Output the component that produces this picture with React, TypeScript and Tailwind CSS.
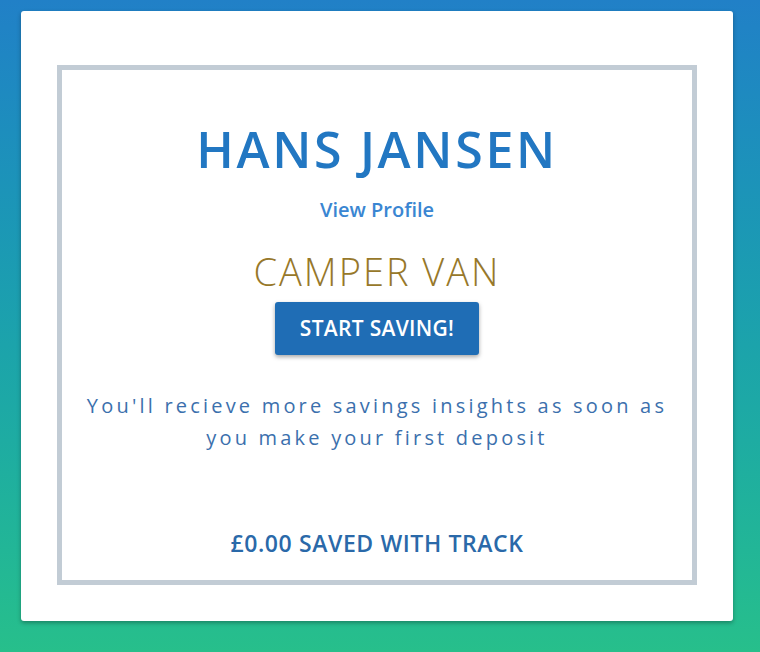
export default function App() {
    return (
        <div className="min-h-[652px] bg-gradient-to-b from-[#2180c7] to-[#27bf8b] pt-[11px] font-['Open_Sans',sans-serif]">
            <div className="ml-[21px] h-[610px] w-[712px] rounded-[3px] bg-white px-[36px] pt-[54px] shadow-[0_2px_4px_rgba(0,0,0,0.3)]">
                <div className="flex h-[520px] flex-col items-center border-[5px] border-[#c2ccd5] text-center">
                    <h1 className="mt-[49px] text-[50px] leading-[60px] font-semibold tracking-[2.7px] text-[#2277c2]">
                        HANS JANSEN
                    </h1>
                    <a className="mt-[17px] text-[20px] leading-[28px] font-semibold text-[#3a86d2]">
                        View Profile
                    </a>
                    <h2 className="mt-[23px] text-[38px] leading-[48px] font-light tracking-[2px] text-[#97782a]">
                        CAMPER VAN
                    </h2>
                    <button className="mt-[7px] h-[53px] w-[204px] rounded-[3px] bg-[#1f6db5] text-[21px] font-semibold tracking-[0.3px] text-white shadow-[0_2px_4px_rgba(0,0,0,0.35)]">
                        START SAVING!
                    </button>
                    <p className="mt-[35px] px-[20px] text-[20px] leading-[32px] tracking-[3.2px] text-[#3b70ad]">
                        You'll recieve more savings insights as soon as you
                        make your first deposit
                    </p>
                    <div className="mt-auto mb-[22px] text-[23px] leading-[30px] font-semibold tracking-[0.6px] text-[#2a69a9]">
                        £0.00 SAVED WITH TRACK
                    </div>
                </div>
            </div>
        </div>
    );
}
